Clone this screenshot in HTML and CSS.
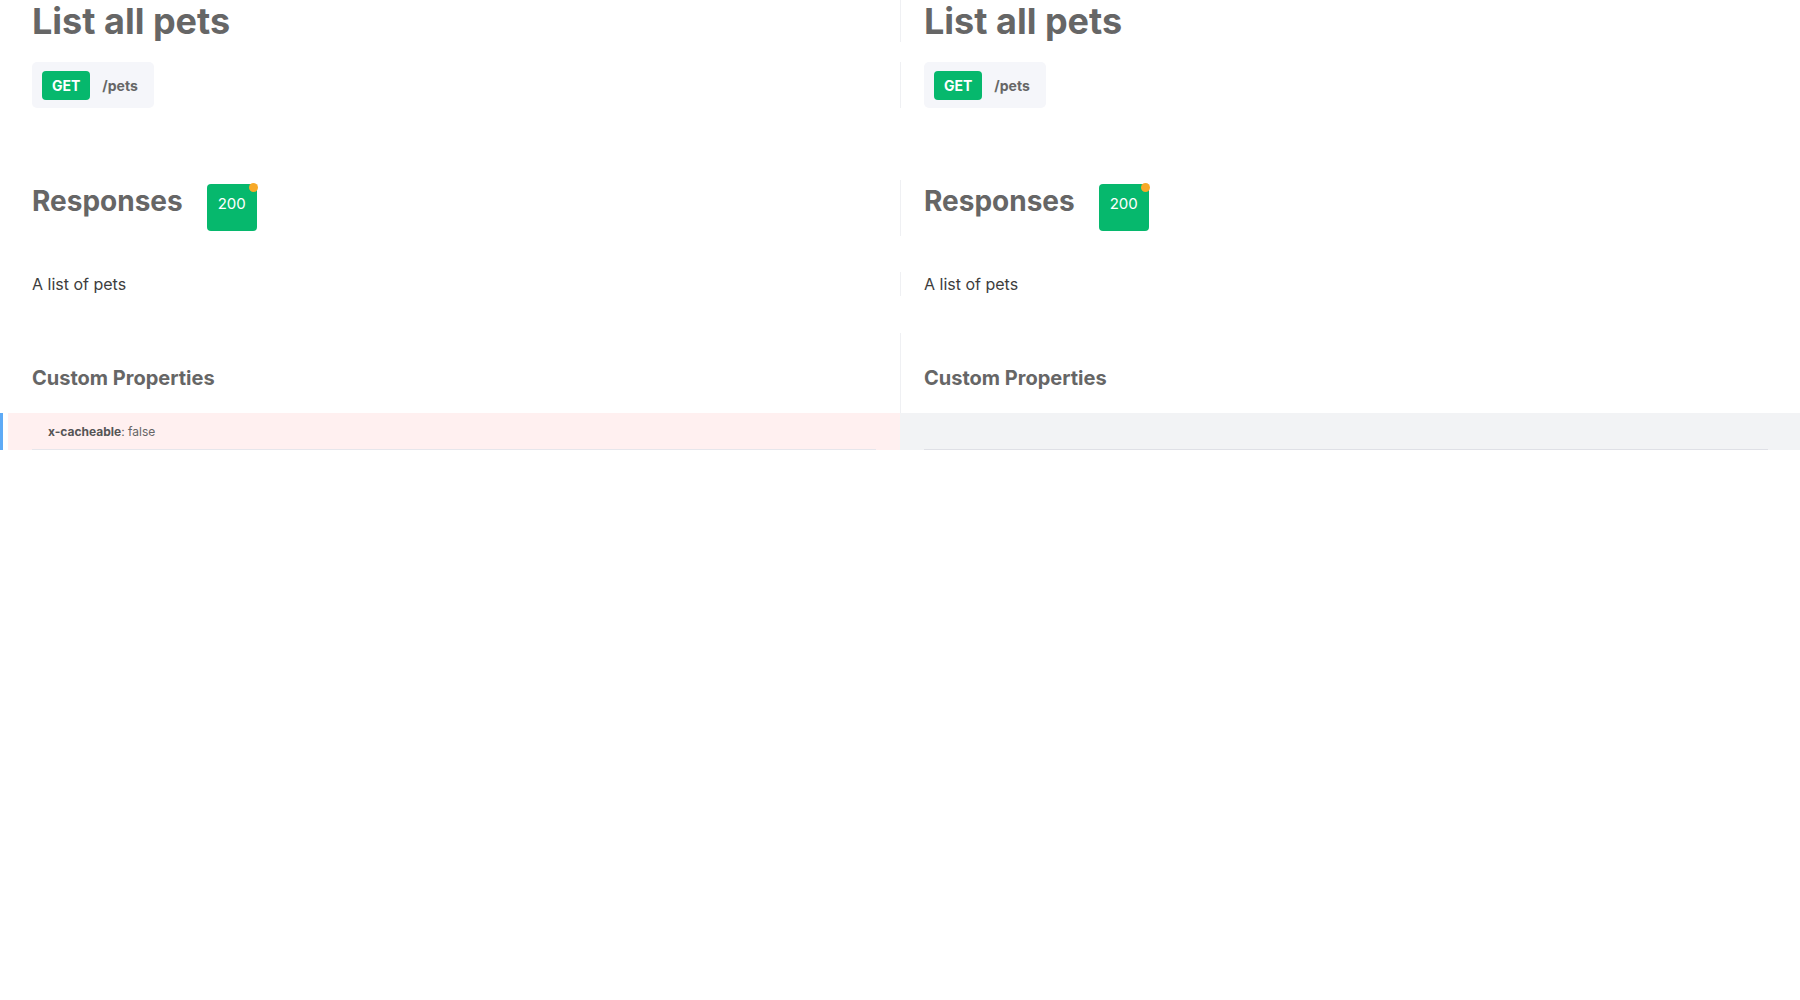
FILE: index.html
```html
<!DOCTYPE html>
<html>
<head>
<meta charset="utf-8">
<link rel="stylesheet" href="styles.css">
</head>
<body>
<div class="page">
  <div class="row row-title">
    <div class="cell cell-left"><h1 class="title">List all pets</h1></div>
    <div class="cell cell-right"><h1 class="title">List all pets</h1></div>
  </div>
  <div class="row row-endpoint">
    <div class="cell cell-left">
      <div class="endpoint"><span class="method">GET</span><span class="path">/pets</span></div>
    </div>
    <div class="cell cell-right">
      <div class="endpoint"><span class="method">GET</span><span class="path">/pets</span></div>
    </div>
  </div>
  <div class="row row-responses">
    <div class="cell cell-left">
      <div class="resp-head"><h2 class="resp-title">Responses</h2><span class="code">200<span class="dot"></span></span></div>
    </div>
    <div class="cell cell-right">
      <div class="resp-head"><h2 class="resp-title">Responses</h2><span class="code">200<span class="dot"></span></span></div>
    </div>
  </div>
  <div class="row row-desc">
    <div class="cell cell-left"><p class="desc">A list of pets</p></div>
    <div class="cell cell-right"><p class="desc">A list of pets</p></div>
  </div>
  <div class="row row-custom">
    <div class="cell cell-left"><h3 class="custom-title">Custom Properties</h3></div>
    <div class="cell cell-right"><h3 class="custom-title">Custom Properties</h3></div>
  </div>
  <div class="row row-prop">
    <div class="prop-left">
      <span class="marker"></span>
      <div class="prop-removed">
        <div class="prop-item"><b class="prop-key">x-cacheable</b>: false</div>
      </div>
    </div>
    <div class="prop-right">
      <div class="prop-item prop-empty"></div>
    </div>
  </div>
</div>
</body>
</html>
```

FILE: styles.css
```css
html, body {
  margin: 0;
  padding: 0;
  background: #ffffff;
}
body {
  font-family: Inter, "Noto Sans", sans-serif;
  color: #666666;
}
.page {
  width: 1800px;
}
.row {
  display: grid;
  grid-template-columns: 900px 900px;
}
.cell-left {
  padding: 0 24px 0 32px;
}
.cell-right {
  border-left: 1px solid #eff0f3;
  padding: 0 32px 0 23px;
}
.title {
  margin: 0;
  font-size: 36px;
  line-height: 42px;
  font-weight: 700;
  color: #666666;
}
.row-endpoint {
  margin-top: 20px;
}
.endpoint {
  display: inline-flex;
  align-items: center;
  height: 46px;
  box-sizing: border-box;
  padding: 1px 16px 0 10px;
  background: #f5f6fa;
  border-radius: 5px;
}
.method {
  display: inline-flex;
  align-items: center;
  justify-content: center;
  height: 29px;
  padding: 0 10px;
  background: #06b86d;
  color: #ffffff;
  font-size: 14px;
  font-weight: 700;
  border-radius: 4px;
}
.path {
  margin-left: 12px;
  font-size: 14px;
  font-weight: 700;
  color: #666666;
}
.row-responses {
  margin-top: 72px;
}
.row-responses .cell {
  padding-top: 4px;
  padding-bottom: 5px;
}
.resp-head {
  display: flex;
  align-items: flex-start;
}
.resp-title {
  margin: 0;
  font-size: 28px;
  line-height: 34px;
  font-weight: 700;
  color: #666666;
}
.code {
  position: relative;
  margin-left: 24px;
  width: 50px;
  height: 47px;
  box-sizing: border-box;
  padding-top: 10px;
  text-align: center;
  background: #06b86d;
  color: #ffffff;
  font-size: 15px;
  line-height: 20px;
  font-weight: 400;
  border-radius: 4px;
}
.dot {
  position: absolute;
  top: -1px;
  right: -1px;
  width: 9px;
  height: 9px;
  border-radius: 50%;
  background: #f7a928;
}
.row-desc {
  margin-top: 36px;
}
.desc {
  margin: 0;
  font-size: 16px;
  line-height: 24px;
  color: #3d3d3d;
}
.row-custom {
  margin-top: 37px;
}
.row-custom .cell {
  padding-top: 31px;
  padding-bottom: 21px;
}
.custom-title {
  margin: 0;
  font-size: 20px;
  line-height: 28px;
  font-weight: 700;
  color: #666666;
}
.prop-left {
  display: flex;
}
.marker {
  width: 3px;
  background: #5eaaf6;
  margin-right: 5px;
}
.prop-removed {
  flex: 1;
  background: #fff0f0;
  padding: 0 24px;
}
.prop-right {
  background: #f2f3f5;
  padding: 0 32px 0 24px;
}
.prop-item {
  height: 36px;
  padding: 0 16px;
  display: flex;
  align-items: center;
  font-size: 12px;
  color: #666666;
  border-bottom: 1px solid #e6e6eb;
}
.prop-empty {
  border-bottom-color: #dfe0e6;
}
.prop-key {
  font-weight: 700;
  color: #555555;
}
```
